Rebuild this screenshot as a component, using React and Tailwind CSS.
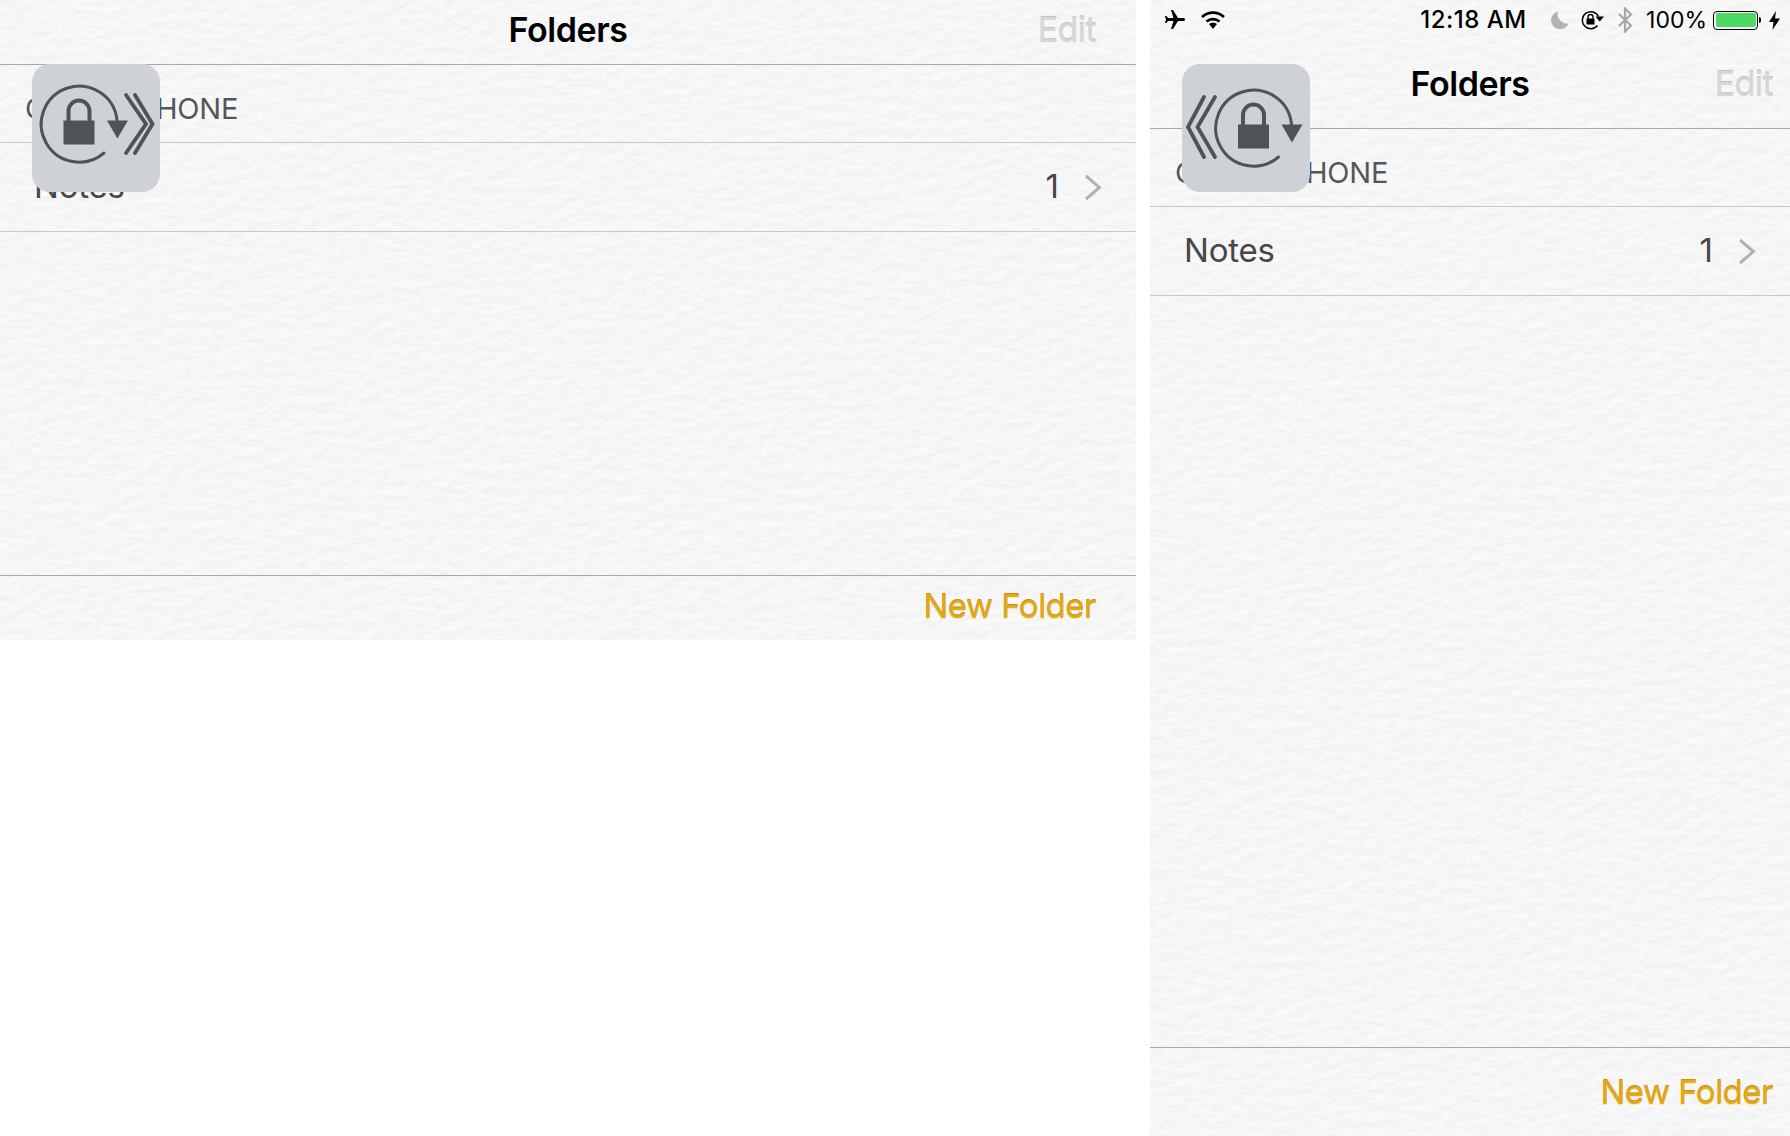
import { useId } from "react";

const font = "font-['Inter','Liberation_Sans',sans-serif]";
const editShadow = "[text-shadow:0_1px_0_#f4f4f4,0_-1px_0_#c2c2c2]";
const goldShadow = "[text-shadow:0_-1px_0_#c98f12,0_1px_0_#f7e3a8]";

// watercolor paper look of the Notes app
function Paper() {
  const id = useId();
  return (
    <svg className="absolute inset-0 w-full h-full" aria-hidden="true">
      <filter id={id} x="0" y="0" width="100%" height="100%" colorInterpolationFilters="sRGB">
        <feTurbulence type="fractalNoise" baseFrequency="0.07 0.12" numOctaves="3" seed="7" />
        <feDiffuseLighting surfaceScale="0.3" diffuseConstant="1" lightingColor="#ffffff">
          <feDistantLight azimuth="250" elevation="75" />
        </feDiffuseLighting>
      </filter>
      <rect width="100%" height="100%" filter={`url(#${id})`} />
    </svg>
  );
}

function LockBadge({ cx, cy, chevrons }) {
  return (
    <div className="absolute left-8 top-[64px] w-32 h-32 rounded-[18px] bg-[#ced1d6]">
      <svg width="128" height="128" viewBox="0 0 128 128" fill="none">
        <g transform={`translate(${cx} ${cy})`} stroke="#4f5358">
          <path d="M25 29 A38 38 0 1 1 38 -4" strokeWidth="3" strokeLinecap="round" />
          <path d="M28 -3.5 H49 L38.4 14.5 Z" fill="#4f5358" stroke="none" />
          <rect x="-15.5" y="-3.5" width="31" height="24" fill="#4f5358" stroke="none" />
          <path d="M-10.5 -3 V-13 A10.5 10.5 0 0 1 10.5 -13 V-3" strokeWidth="4" />
        </g>
        {chevrons.map((pts) => (
          <polyline key={pts} points={pts} stroke="#4f5358" strokeWidth="3.8" strokeLinecap="round" />
        ))}
      </svg>
    </div>
  );
}

function Chevron() {
  return (
    <svg width="18" height="27" viewBox="0 0 18 27" fill="none" className="ml-[25px]">
      <polyline points="2,2 15.5,13.5 2,25" stroke="#b0b0b6" strokeWidth="3" />
    </svg>
  );
}

function StatusBar() {
  return (
    <div className="h-10 grid grid-cols-[1fr_auto_1fr] items-center pl-[13px] pr-[6px] text-black">
      <div className="flex items-center gap-[13px]">
        <svg width="24" height="24" viewBox="0 0 24 24" fill="#000">
          <path
            transform="rotate(90 12 12)"
            d="M21 16v-2l-8-5V3.5c0-.83-.67-1.5-1.5-1.5S10 2.67 10 3.5V9l-8 5v2l8-2.5V19l-2 1.5V22l3.5-1 3.5 1v-1.5L13 19v-5.5l8 2.5z"
          />
        </svg>
        <svg width="26" height="20" viewBox="0 0 26 20" fill="none" stroke="#000" strokeWidth="2.6">
          <path d="M2 7 A16 16 0 0 1 24 7" />
          <path d="M6.5 11.5 A10 10 0 0 1 19.5 11.5" />
          <path d="M9 14 L13 19 L17 14 A6 6 0 0 0 9 14 Z" fill="#000" stroke="none" />
        </svg>
      </div>
      <span className="text-[24px] tracking-[0.5px] font-medium">12:18 AM</span>
      <div className="flex items-center justify-end">
        <svg width="19" height="18" viewBox="0 0 19 18" className="mr-[12px]" fill="#b4b4b4">
          <path d="M8 0.5 A9 9 0 1 0 18.5 12.5 A9.5 9.5 0 0 1 8 0.5 Z" />
        </svg>
        <svg width="24" height="20" viewBox="0 0 24 20" fill="none" className="mr-[12px]">
          <path d="M16.5 15.5 A8.5 8.5 0 1 1 17.5 6.5" stroke="#000" strokeWidth="1.4" />
          <path d="M14.5 6.5 H23 L18.7 11.5 Z" fill="#000" />
          <rect x="5.5" y="8.5" width="8" height="6" fill="#000" />
          <path d="M7 9 V7 A2.5 2.5 0 0 1 12 7 V9" stroke="#000" strokeWidth="1.3" />
        </svg>
        <svg width="16" height="26" viewBox="0 0 16 26" fill="none" stroke="#a6a6a6" strokeWidth="2.2" className="mr-[13px]">
          <path d="M2 7 L14 18.5 L8 24.5 V1.5 L14 7.5 L2 19" />
        </svg>
        <span className="text-[23px] mr-[6px]">100%</span>
        <div className="w-[45px] h-[19px] rounded-[4px] border border-black p-[1.5px]">
          <div className="w-full h-full rounded-[2px] bg-[#4cd964]" />
        </div>
        <div className="w-[2px] h-[6px] bg-black rounded-r-sm ml-[1px] mr-[8px]" />
        <svg width="11" height="19" viewBox="0 0 11 19" fill="#000" className="mr-[4px]">
          <path d="M7 0 L0 11 H4.5 L3.5 19 L11 7.5 H6 Z" />
        </svg>
      </div>
    </div>
  );
}

function Folders({ statusBar, navPad, barH }) {
  return (
    <>
      <Paper />
      <div className={`relative h-full flex flex-col ${font}`}>
        {statusBar && <StatusBar />}
        <div className={`shrink-0 grid grid-cols-[1fr_auto_1fr] items-center border-b border-[#a9a9a9] ${statusBar ? "h-[89px] pb-0" : "h-[65px] pb-1"} ${navPad}`}>
          <div />
          <h1 className="text-[34px] leading-none font-semibold tracking-[-0.4px] text-black">Folders</h1>
          <button className={`justify-self-end text-[34px] leading-none tracking-[-0.6px] text-[#d6d6d6] ${editShadow}`}>Edit</button>
        </div>
        <div className="shrink-0 h-[78px] flex items-end pl-[25px] pb-[19px] border-b border-[#c5c5c5] text-[29px] leading-none tracking-[-0.2px] text-[#55565a]">
          ON MY IPHONE
        </div>
        <div className="shrink-0 h-[89px] flex items-center pl-[34px] pr-[34px] border-b border-[#c9c9c9] text-[#47474a]">
          <span className="text-[33px] tracking-[-0.2px] flex-1">Notes</span>
          <span className="text-[33px]">1</span>
          <Chevron />
        </div>
        <div className="flex-1" />
        <div className={`shrink-0 flex items-center justify-end border-t border-[#a9a9a9] ${barH} ${navPad}`}>
          <button className={`text-[33px] leading-none tracking-[-0.5px] text-[#e2a818] ${goldShadow}`}>New Folder</button>
        </div>
      </div>
    </>
  );
}

export default function App() {
  return (
    <div className="w-[1790px] h-[1136px] bg-white flex justify-between items-start overflow-hidden">
      <div className="relative w-[1136px] h-[640px]">
        <Folders navPad="px-10" barH="h-[65px] pb-1" />
        <LockBadge cx={47} cy={60} chevrons={["94,31 114,60 94,89", "103,31 120.5,60 103,89"]} />
      </div>
      <div className="relative w-[640px] h-[1136px]">
        <Folders statusBar navPad="px-[17px]" barH="h-[89px]" />
        <LockBadge cx={71.5} cy={64} chevrons={["22,33 6,63 22,93", "33,33 15.5,63 33,93"]} />
      </div>
    </div>
  );
}
